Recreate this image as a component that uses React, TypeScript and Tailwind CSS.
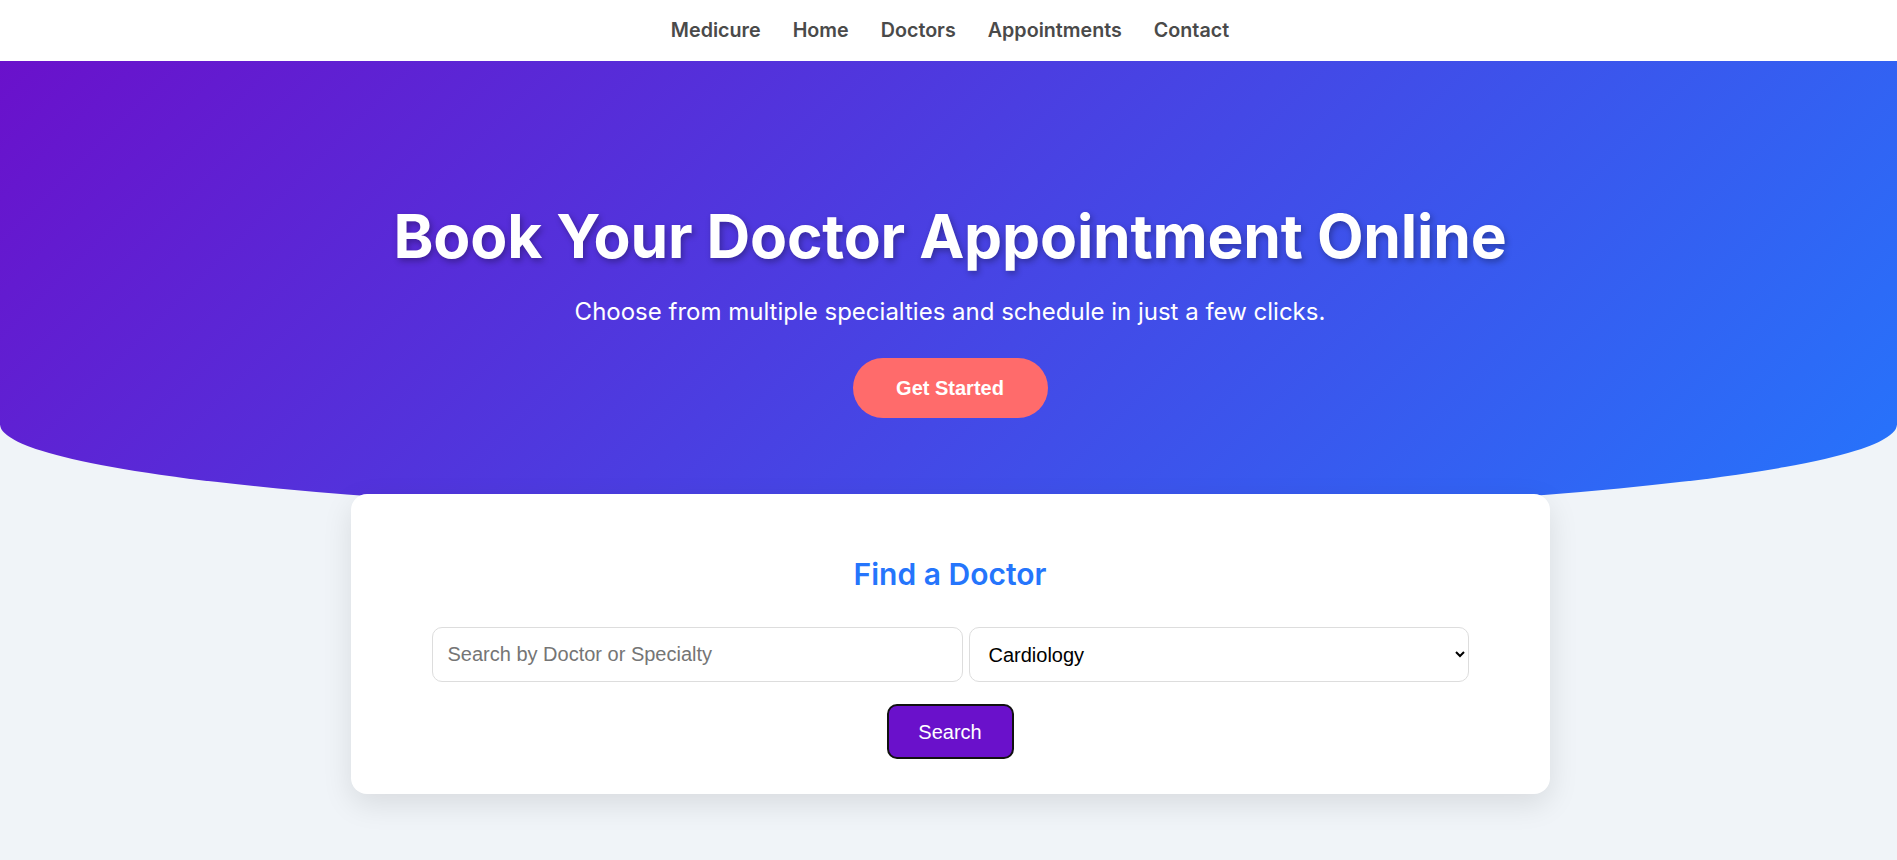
import React from "react";

export default function App() {
  const navItems = ["Medicure", "Home", "Doctors", "Appointments", "Contact"];
  return (
    <div className="min-h-[860px] w-full bg-[#f0f4f8] font-['Inter',sans-serif]">
      <nav className="flex h-[61px] items-center justify-center gap-[32px] bg-white pl-[3px]">
        {navItems.map((n) => (
          <a key={n} className="text-[19.7px] font-semibold leading-none text-[#4a4a4a]" href="#">
            {n}
          </a>
        ))}
      </nav>

      <section className="flex h-[454px] flex-col items-center rounded-bl-[50%_20%] rounded-br-[50%_20%] bg-[linear-gradient(135deg,#6a11cb,#2575fc)] pl-[3px] pt-[139px] text-white">
        <h1 className="text-[60.5px] font-bold leading-[1.2] tracking-[-0.2px] [text-shadow:2px_3px_6px_rgba(0,0,0,0.3)]">
          Book Your Doctor Appointment Online
        </h1>
        <p className="mt-[21px] text-[24px] leading-[1.5]">
          Choose from multiple specialties and schedule in just a few clicks.
        </p>
        <button className="mt-[28px] h-[60px] w-[195px] rounded-full bg-[#ff6b6b] font-['Liberation_Sans',Arial,sans-serif] text-[20px] font-bold text-white">
          Get Started
        </button>
      </section>

      <div className="flex justify-center pl-[3px]">
        <div className="relative -mt-[21px] flex h-[300px] w-[1199px] flex-col items-center rounded-2xl bg-white pt-[62px] shadow-[0_10px_30px_rgba(0,0,0,0.1)]">
          <h2 className="text-[30px] font-semibold leading-[1.2] text-[#2575fc]">Find a Doctor</h2>
          <div className="mt-[35px] flex w-[1037px] gap-[6px] font-['Liberation_Sans',Arial,sans-serif]">
            <input
              className="h-[55px] w-[531px] rounded-[10px] border border-[#dddddd] bg-white px-[15px] text-[20px] text-black outline-none placeholder:text-[#757575]"
              placeholder="Search by Doctor or Specialty"
            />
            <select
              defaultValue="Cardiology"
              className="h-[55px] w-[500px] rounded-[10px] border border-[#dddddd] bg-white px-[15px] text-[20px] text-black outline-none"
            >
              <option>Cardiology</option>
              <option>Dermatology</option>
              <option>Neurology</option>
              <option>Pediatrics</option>
            </select>
          </div>
          <button className="mt-[22px] h-[55px] w-[127px] rounded-[10px] border-2 border-[#111111] bg-[#6a11cb] font-['Liberation_Sans',Arial,sans-serif] text-[20px] text-white">
            Search
          </button>
        </div>
      </div>
    </div>
  );
}
